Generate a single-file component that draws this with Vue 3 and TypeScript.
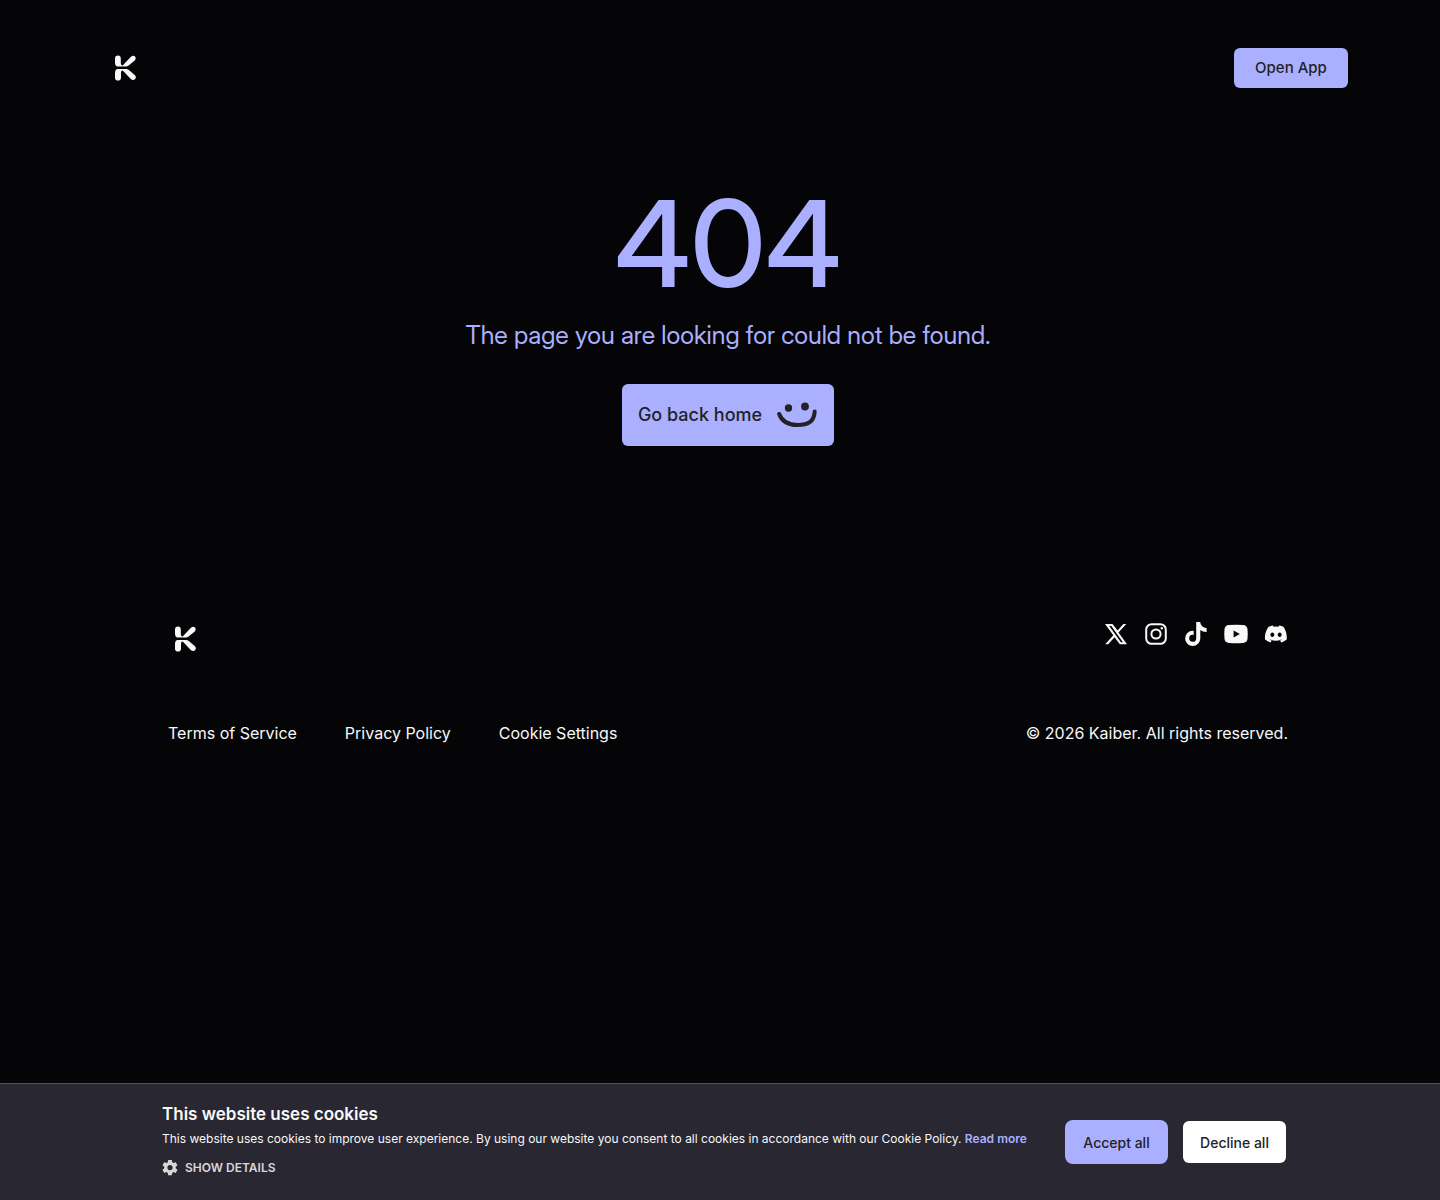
<script setup lang="ts">
interface FooterLink {
  label: string
  href: string
}

interface SocialLink extends FooterLink {
  path: string
}

const legalLinks: FooterLink[] = [
  { label: 'Terms of Service', href: '#terms' },
  { label: 'Privacy Policy', href: '#privacy' },
  { label: 'Cookie Settings', href: '#cookies' },
]

const socialLinks: SocialLink[] = [
  {
    label: 'X',
    href: '#x',
    path: 'M14.5 10.400 22.300 2h-3l-5.700 6.600L8.500 2H1l8.300 11.300L1.200 22.300h3l6.300-7.100 5.400 7.100H23zM5.200 4.100h2.100l11.600 16.200h-2z',
  },
  {
    label: 'Instagram',
    href: '#instagram',
    path: 'M7.6 1.2h8.8a6.4 6.4 0 0 1 6.4 6.4v8.8a6.4 6.4 0 0 1-6.4 6.4H7.6a6.4 6.4 0 0 1-6.4-6.4V7.6a6.4 6.4 0 0 1 6.4-6.4zm0 2a4.4 4.4 0 0 0-4.4 4.4v8.8a4.4 4.4 0 0 0 4.4 4.4h8.8a4.4 4.4 0 0 0 4.4-4.4V7.6a4.4 4.4 0 0 0-4.4-4.4zM12 6.4a5.6 5.6 0 1 1 0 11.2 5.6 5.6 0 0 1 0-11.2zm0 2a3.6 3.6 0 1 0 0 7.2 3.6 3.6 0 0 0 0-7.2zM17.8 4.9a1.3 1.3 0 1 1 0 2.6 1.3 1.3 0 0 1 0-2.6z',
  },
  {
    label: 'TikTok',
    href: '#tiktok',
    path: 'M16.2 0h-4v16.4a3.5 3.5 0 1 1-3.5-3.6c.4 0 .7.1 1 .2V8.9l-1-.1a7.6 7.6 0 1 0 7.6 7.6V8a9.6 9.6 0 0 0 6.3 2V5.9a6 6 0 0 1-6.400-5.900z',
  },
  {
    label: 'YouTube',
    href: '#youtube',
    path: 'M5 3.100Q12 2.500 19 3.100Q23.100 3.400 23.500 7.200Q24 12 23.500 16.800Q23.100 20.600 19 20.900Q12 21.500 5 20.900Q.9 20.600.5 16.800Q0 12 .5 7.200Q.9 3.400 5 3.100zM9.600 8.500v7l6.200-3.500z',
  },
  {
    label: 'Discord',
    href: '#discord',
    path: 'M20.317 4.37a19.8 19.8 0 0 0-4.885-1.515c-.21.375-.444.864-.608 1.25a18.3 18.3 0 0 0-5.487 0c-.164-.386-.4-.875-.617-1.25A19.7 19.7 0 0 0 3.677 4.37C.533 9.046-.32 13.58.1 18.058a20 20 0 0 0 5.993 3.03c.462-.63.874-1.295 1.226-1.994a13 13 0 0 1-1.872-.892l.372-.292c3.928 1.793 8.18 1.793 12.062 0l.372.292c-.598.35-1.22.645-1.873.892.36.698.772 1.362 1.225 1.993a19.8 19.8 0 0 0 6.002-3.03c.5-5.177-.838-9.674-3.29-13.687zM8.02 15.33c-1.183 0-2.157-1.085-2.157-2.419s.955-2.419 2.157-2.419 2.176 1.096 2.157 2.42c0 1.333-.956 2.418-2.157 2.418zm7.975 0c-1.183 0-2.157-1.085-2.157-2.419s.955-2.419 2.157-2.419 2.176 1.096 2.157 2.42c0 1.333-.946 2.418-2.157 2.418z',
  },
]

const logoPath =
  'M3 .5C4.900.5 5.800 1.700 5.800 3.500v4c0 2 .7 2.900 1.900 2.900L15.900 1.800c3-3 6.500.7 3.900 3.700L14.800 9.600c-1.500 1.400-2.700 2-4.700 2H2.800C.8 11.600 0 9.600 0 7.500V3.500C0 1.700 1.100.5 3 .5zM2.800 13.900h7.500c2 0 3.200.6 4.700 2l5 4.300c2.600 3-1.300 6.700-4.200 3.900L7.700 15.500C6.400 15.500 6 16.500 6 18v4.700c0 1.800-1.100 2.900-3 2.900s-3-1.100-3-2.900V18c0-2.200.8-4.100 2.800-4.100z'
</script>

<template>
  <div class="page">
    <header class="header">
      <a class="logo" href="#home" aria-label="Kaiber">
        <svg viewBox="0 0 21 26" aria-hidden="true"><path :d="logoPath" /></svg>
      </a>
      <button class="open-app" type="button">Open App</button>
    </header>

    <main class="main">
      <h1>404</h1>
      <p>The page you are looking for could not be found.</p>
      <a class="home-link" href="#home">
        Go back home
        <svg class="smile" viewBox="0 0 40 26" aria-hidden="true">
          <circle cx="11.500" cy="6" r="3.700" />
          <circle cx="28" cy="4.500" r="3.900" />
          <path d="M2.200 12C5 20 12.500 23 20.500 23C31 23 37 20 37.700 9.500" />
        </svg>
      </a>
    </main>

    <footer class="footer">
      <div class="footer-row">
        <a class="logo" href="#home" aria-label="Kaiber">
          <svg viewBox="0 0 21 26" aria-hidden="true"><path :d="logoPath" /></svg>
        </a>
        <nav class="socials" aria-label="Social media">
          <a v-for="item in socialLinks" :key="item.label" :href="item.href" :aria-label="item.label">
            <svg :viewBox="item.label === 'Discord' ? '-1 -1 26 26' : '0 0 24 24'" aria-hidden="true">
              <path fill-rule="evenodd" :d="item.path" />
            </svg>
          </a>
        </nav>
      </div>
      <div class="footer-row legal">
        <nav class="links" aria-label="Legal">
          <a v-for="link in legalLinks" :key="link.label" :href="link.href">{{ link.label }}</a>
        </nav>
        <p>© 2026 Kaiber. All rights reserved.</p>
      </div>
    </footer>

    <section class="cookies" aria-labelledby="cookie-title">
      <div class="cookies-inner">
        <div class="cookies-text">
          <h2 id="cookie-title">This website uses cookies</h2>
          <p>
            This website uses cookies to improve user experience. By using our website you consent to all cookies in accordance with our Cookie Policy.
            <a href="#policy">Read more</a>
          </p>
          <button class="details" type="button">
            <svg viewBox="0 0 16 16" aria-hidden="true">
              <path
                fill-rule="evenodd"
                d="M6.200 0h3.600l.4 2.300 1.300.7 2.200-.8 1.800 3-1.800 1.500v1.600l1.800 1.500-1.800 3.100-2.200-.8-1.300.8-.4 2.300H6.200l-.4-2.300-1.300-.8-2.200.8-1.800-3.100 1.800-1.500V6.700L.5 5.200l1.800-3 2.200.8 1.300-.7zM8 5a2.600 2.600 0 1 0 0 5.200A2.600 2.600 0 0 0 8 5z"
              />
            </svg>
            SHOW DETAILS
          </button>
        </div>
        <div class="cookies-actions">
          <button class="accept" type="button">Accept all</button>
          <button class="decline" type="button">Decline all</button>
        </div>
      </div>
    </section>
  </div>
</template>

<style>
body {
  background: #050507;
}
</style>

<style scoped>
.page {
  box-sizing: border-box;
  min-height: 100vh;
  padding: 48px 0 120px 16px;
  background: #050507;
  color: #f8f8f8;
  font-family: Inter, sans-serif;
  font-size: 16px;
  line-height: 24px;
}

h1,
h2,
p {
  margin: 0;
}

a {
  color: inherit;
  text-decoration: none;
}

button {
  border: 0;
  font-family: inherit;
  cursor: pointer;
}

svg {
  display: block;
  fill: currentColor;
}

.header {
  display: flex;
  align-items: center;
  justify-content: space-between;
  max-width: 1240px;
  margin: 0 auto;
}

.logo {
  padding: 0 7px;
}

.logo svg {
  width: 21px;
  height: 26px;
}

.open-app {
  width: 114px;
  height: 40px;
  padding: 0 0 2px;
  border-radius: 6px;
  background: #abafff;
  color: #222226;
  font-size: 15px;
  font-weight: 500;
}

.main {
  display: flex;
  flex-direction: column;
  align-items: center;
  margin-top: 96px;
  color: #abafff;
  text-align: center;
}

h1,
.main p {
  font-family: "Inter Display", Inter, sans-serif;
}

h1 {
  font-size: 120px;
  font-weight: 500;
  line-height: 120px;
}

.main p {
  margin-top: 16px;
  font-size: 25px;
  line-height: 30px;
}

.home-link {
  display: flex;
  align-items: center;
  gap: 15px;
  height: 62px;
  margin-top: 34px;
  padding: 0 17px 0 16px;
  border-radius: 6px;
  background: #abafff;
  color: #222226;
  font-size: 18px;
  font-weight: 500;
}

.smile {
  width: 40px;
  height: 26px;
}

.smile path {
  fill: none;
  stroke: currentColor;
  stroke-width: 4;
  stroke-linecap: round;
}

.footer {
  max-width: 1120px;
  margin: 176px auto 0;
}

.footer-row {
  display: flex;
  justify-content: space-between;
}

.footer-row .logo {
  padding-top: 4px;
}

.socials {
  display: flex;
  gap: 16px;
}

.socials svg {
  width: 24px;
  height: 24px;
}

.legal {
  margin-top: 69px;
}

.links {
  display: flex;
  gap: 48px;
}

.cookies {
  position: fixed;
  right: 0;
  bottom: 0;
  left: 0;
  border-top: 1px solid #505066;
  background: #292731;
}

.cookies-inner {
  display: flex;
  align-items: center;
  justify-content: space-between;
  max-width: 1124px;
  margin: 0 auto;
  padding: 18px 0 20px 8px;
}

.cookies h2 {
  font-size: 17px;
  font-weight: 600;
  line-height: 24px;
}

.cookies p {
  margin-top: 1px;
  font-size: 12px;
  line-height: 24px;
}

.cookies p a {
  color: #abafff;
  font-weight: 600;
}

.details {
  display: flex;
  align-items: center;
  gap: 7px;
  margin-top: 5px;
  padding: 0;
  background: none;
  color: #d8d8da;
  font-size: 12px;
  font-weight: 600;
  line-height: 24px;
}

.details svg {
  width: 16px;
  height: 16px;
}

.cookies-actions {
  display: flex;
  align-items: center;
  gap: 15px;
  padding-top: 2px;
}

.cookies-actions button {
  width: 103px;
  height: 44px;
  padding: 0;
  border-radius: 8px;
  background: #abafff;
  color: #222226;
  font-size: 14px;
  font-weight: 500;
}

.cookies-actions .decline {
  height: 42px;
  border-radius: 6px;
  background: #ffffff;
}
</style>
